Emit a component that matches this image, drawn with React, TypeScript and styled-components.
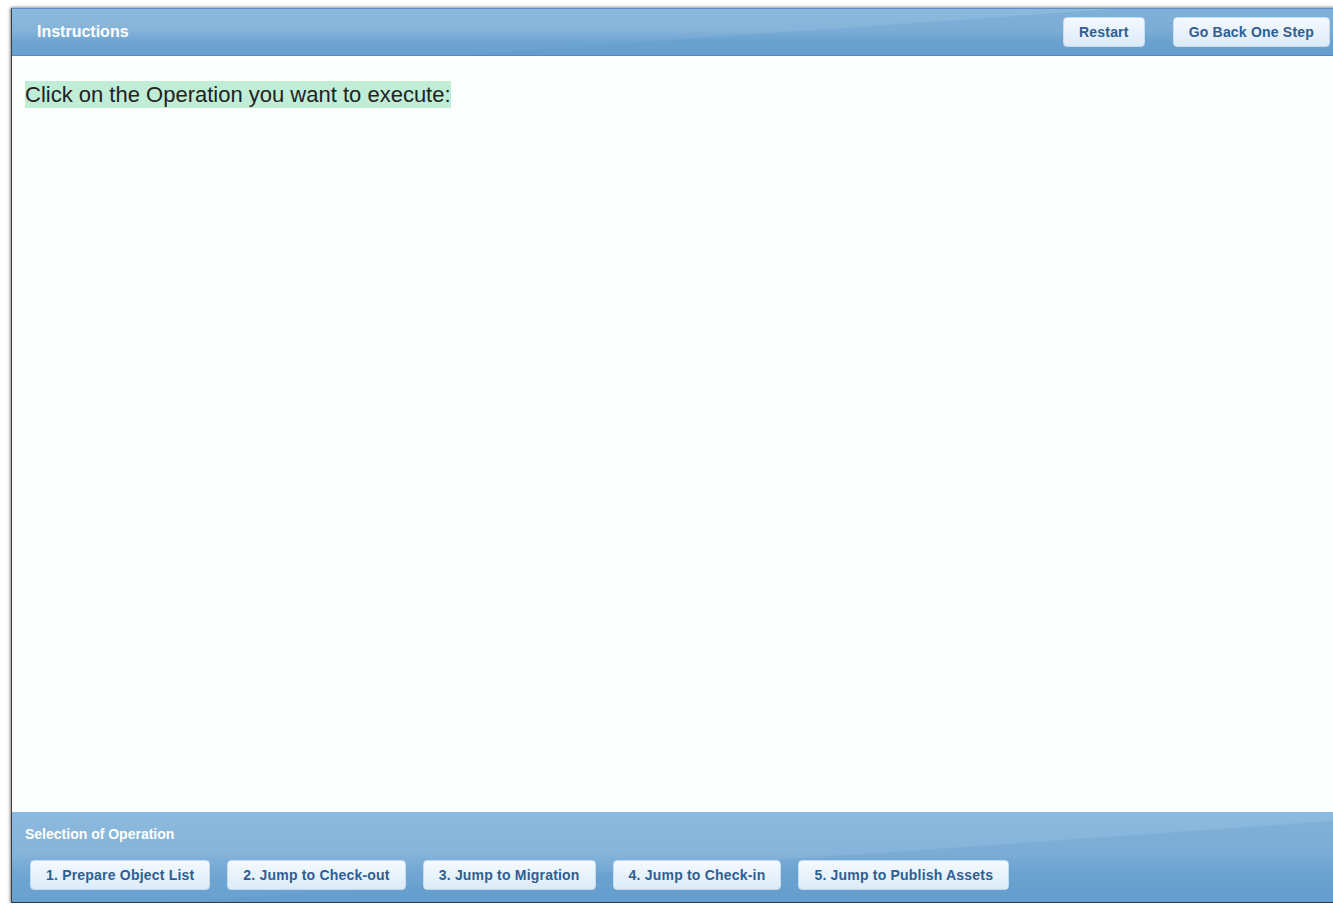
import React from "react";
import styled, { createGlobalStyle } from "styled-components";

const Global = createGlobalStyle`
  html, body { margin: 0; padding: 0; overflow: hidden; background: #ffffff; }
  body { font-family: "Liberation Sans", Arial, sans-serif; }
`;

const Frame = styled.div`
  margin: 8px 0 0 11px;
  width: 1330px;
  height: 895px;
  display: flex;
  flex-direction: column;
  border: 1px solid #3a3a3a;
  border-top-color: #5b8fc6;
  box-shadow: -1px 0 3px rgba(0, 0, 0, 0.35), 0 -1px 3px rgba(0, 0, 0, 0.25);
  box-sizing: border-box;
`;

const wave = `
  linear-gradient(176deg, rgba(255,255,255,0) 55%, rgba(90,150,200,0.25) 56%),
  linear-gradient(to bottom, #8cb9dd 0%, #86b4da 45%, #6fa5d2 70%, #68a0cf 100%)
`;

const Header = styled.div`
  height: 46px;
  display: flex;
  align-items: center;
  padding: 0 10px 0 25px;
  background: ${wave};
  border-bottom: 1px solid #4e8bc8;
  flex-shrink: 0;
`;

const Title = styled.div<{ size: number }>`
  color: #ffffff;
  font-weight: bold;
  font-size: ${(p) => p.size}px;
  flex: 1;
`;

const Button = styled.button`
  height: 30px;
  padding: 0 15px;
  border: 1px solid #c5dcef;
  border-radius: 4px;
  background: linear-gradient(to bottom, #f4f9fe 0%, #e8f2fc 50%, #dcebf9 100%);
  color: #2e5f92;
  font-family: "Liberation Sans", Arial, sans-serif;
  font-weight: bold;
  font-size: 14px;
  letter-spacing: 0.2px;
  cursor: pointer;
`;

const HeaderButtons = styled.div`
  display: flex;
  gap: 28px;
`;

const Content = styled.div`
  flex: 1;
  background: #fcfefe;
  padding: 26px 13px;
`;

const Prompt = styled.span`
  font-size: 22px;
  color: #222;
  background: #c0edd6;
  padding: 1px 0;
`;

const Footer = styled.div`
  height: 90px;
  flex-shrink: 0;
  background: ${wave};
  padding: 14px 13px 0;
  box-sizing: border-box;
`;

const FooterButtons = styled.div`
  display: flex;
  gap: 17px;
  margin-top: 18px;
  padding-left: 5px;
`;

const ops = [
  "1. Prepare Object List",
  "2. Jump to Check-out",
  "3. Jump to Migration",
  "4. Jump to Check-in",
  "5. Jump to Publish Assets",
];

export default function App() {
  return (
    <>
      <Global />
      <Frame>
        <Header>
          <Title size={16}>Instructions</Title>
          <HeaderButtons>
            <Button>Restart</Button>
            <Button>Go Back One Step</Button>
          </HeaderButtons>
        </Header>
        <Content>
          <Prompt>Click on the Operation you want to execute:</Prompt>
        </Content>
        <Footer>
          <Title size={14}>Selection of Operation</Title>
          <FooterButtons>
            {ops.map((o) => (
              <Button key={o}>{o}</Button>
            ))}
          </FooterButtons>
        </Footer>
      </Frame>
    </>
  );
}
